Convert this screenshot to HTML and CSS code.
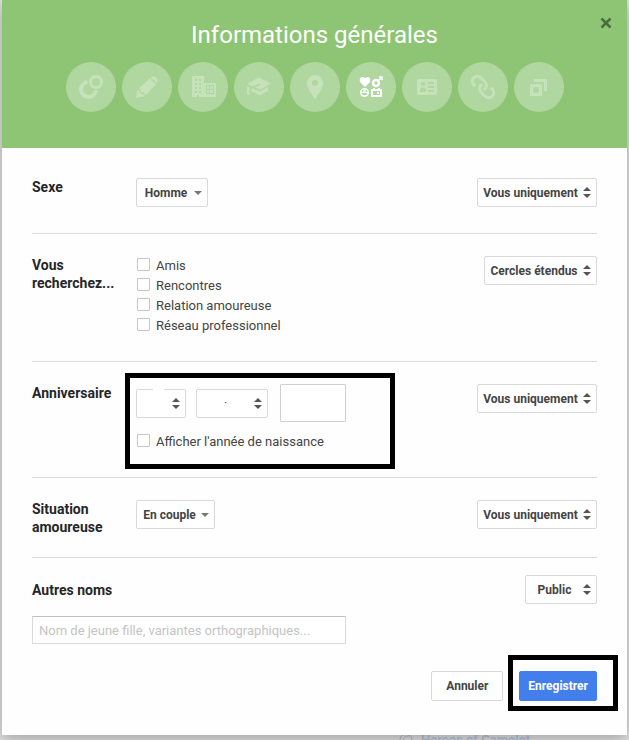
FILE: index.html
```html
<!DOCTYPE html>
<html lang="fr">
<head>
  <meta charset="UTF-8">
  <meta name="viewport" content="width=device-width, initial-scale=1.0">
  <title>Informations générales</title>
  <link rel="stylesheet" href="styles.css">
</head>
<body>
  <div class="behind">
    <svg width="16" height="16" viewBox="0 0 16 16"><circle cx="8" cy="8" r="6"/><path d="M5 11c0-5 2-7 6-7"/></svg>
    Heroes of Camelot
  </div>

  <form class="dialog">
    <header class="header">
      <h1>Informations générales</h1>
      <button type="button" class="close" aria-label="Fermer">
        <svg width="12" height="12" viewBox="0 0 12 12"><path d="M1.500 1.500l9 9M10.500 1.500l-9 9"/></svg>
      </button>
      <nav class="steps">
        <a href="#" class="step" aria-label="Cercles">
          <svg viewBox="0 0 50 50">
            <path d="M21.500 20A7.500 7.500 0 1 0 30 28" fill="none" stroke="currentColor" stroke-width="4"/>
            <circle cx="30" cy="20" r="5.500" fill="none" stroke="currentColor" stroke-width="3"/>
          </svg>
        </a>
        <a href="#" class="step" aria-label="Slogan">
          <svg viewBox="0 0 50 50">
            <path d="M14 36l1.500-8 2 .5 1 3 3 1 .5 2zM16.500 26.500L28 16.500l6 6L23 33.500l-1-2.500-3-1-.5-3zM29 15.500l1.500-1c1.500-1 6 3 5 5L34.500 21z"/>
          </svg>
        </a>
        <a href="#" class="step" aria-label="Emploi">
          <svg viewBox="0 0 50 50">
            <path fill-rule="evenodd" d="M14 14h12v21h-5v-2h-2v2h-5zM17 17v2h2v-2zM21 17v2h2v-2zM17 21v2h2v-2zM21 21v2h2v-2zM17 25v2h2v-2zM21 25v2h2v-2zM17 29v2h2v-2zM21 29v2h2v-2z"/>
            <path fill-rule="evenodd" d="M26 21h12v14H26zM28 23v9h8v-9zM29 24h2v3h-2zM32 24h3v3h-3zM29 28h2v3h-2zM32 28h3v3h-3z"/>
          </svg>
        </a>
        <a href="#" class="step" aria-label="Formation">
          <svg viewBox="0 0 50 50">
            <path d="M13.500 21.500L25 15.500l12 6-10.500 6-5.500-2 6-3-1-1-8 3z"/>
            <path d="M13 24l2.500 1.500V33H13zM17.500 26l8.500 3.500 8-4.500v4l-8 4.500-8.500-4z"/>
          </svg>
        </a>
        <a href="#" class="step" aria-label="Lieux">
          <svg viewBox="0 0 50 50">
            <path fill-rule="evenodd" d="M25 38c-1.500-5-8-10-8-17a8 8 0 0 1 16 0c0 7-6.500 12-8 17zM25 18a3 3 0 1 0 0 6 3 3 0 0 0 0-6z"/>
          </svg>
        </a>
        <a href="#" class="step step-active" aria-label="Informations générales">
          <svg viewBox="0 0 50 50">
            <path d="M19 25l-5-5c-1.500-5 3.500-6.500 5-3.500 1.500-3 6.500-1.500 5 3.500z"/>
            <circle cx="30" cy="21" r="3" fill="none" stroke="currentColor" stroke-width="2.500"/>
            <path d="M32 19l3-3M33 15h3v3" fill="none" stroke="currentColor" stroke-width="1.500"/>
            <path fill-rule="evenodd" d="M18.500 26a4.500 4.500 0 1 0 0 9 4.500 4.500 0 0 0 0-9zM16 28h1.500v2H16zM19.500 28H21v2h-1.500zM15.500 31h6c-.5 3-5.500 3-6 0z"/>
            <path fill-rule="evenodd" d="M25 27h2v-1h2v1h3v-1h2v1h2v8H25zM27 29v4h7v-4zM31 30h2v2h-2z"/>
          </svg>
        </a>
        <a href="#" class="step" aria-label="Coordonnées">
          <svg viewBox="0 0 50 50">
            <path fill-rule="evenodd" d="M16 17h18l1 1v14l-1 1H16l-1-1V18zM21 20a2 2 0 1 0 0 4 2 2 0 0 0 0-4zM18 30h6v-2l-1.500-2.500h-3L18 28zM26 20v2h6v-2zM26 24v2h6v-2zM26 28v2h6v-2z"/>
          </svg>
        </a>
        <a href="#" class="step" aria-label="Liens">
          <svg viewBox="0 0 50 50">
            <g transform="rotate(45 25 25)" fill="none" stroke="currentColor" stroke-width="3">
              <path d="M19 30h-2a5 5 0 0 1 0-10h6a5 5 0 0 1 4.500 6.500"/>
              <path d="M31 20h2a5 5 0 0 1 0 10h-6a5 5 0 0 1-4.500-6.500"/>
            </g>
          </svg>
        </a>
        <a href="#" class="step" aria-label="Photos">
          <svg viewBox="0 0 50 50">
            <path d="M20 17h13v12h-3v-9H20z"/>
            <path fill-rule="evenodd" d="M16 22h12v12H16zM22 25a3 3 0 1 0 0 6 3 3 0 0 0 0-6z"/>
          </svg>
        </a>
      </nav>
    </header>

    <main class="content">
      <section class="row row-first">
        <label class="name" for="sexe">Sexe</label>
        <div class="value">
          <span class="select menu"><select id="sexe"><option>Homme</option></select></span>
        </div>
        <span class="select"><select aria-label="Visibilité du sexe"><option>Vous uniquement</option></select></span>
      </section>

      <section class="row">
        <h2 class="name">Vous recherchez...</h2>
        <div class="value">
          <label class="check"><input type="checkbox">Amis</label>
          <label class="check"><input type="checkbox">Rencontres</label>
          <label class="check"><input type="checkbox">Relation amoureuse</label>
          <label class="check"><input type="checkbox">Réseau professionnel</label>
        </div>
        <span class="select"><select aria-label="Visibilité des recherches"><option>Cercles étendus</option></select></span>
      </section>

      <section class="row">
        <h2 class="name">Anniversaire</h2>
        <div class="value birthday">
          <div class="date">
            <span class="select day"><select aria-label="Jour"><option></option></select></span>
            <span class="select month"><select aria-label="Mois"><option>·</option></select></span>
            <input type="text" class="year" aria-label="Année">
          </div>
          <label class="check"><input type="checkbox">Afficher l'année de naissance</label>
        </div>
        <span class="select"><select aria-label="Visibilité de l'anniversaire"><option>Vous uniquement</option></select></span>
      </section>

      <section class="row row-short">
        <label class="name" for="situation">Situation amoureuse</label>
        <div class="value">
          <span class="select menu"><select id="situation"><option>En couple</option></select></span>
        </div>
        <span class="select"><select aria-label="Visibilité de la situation"><option>Vous uniquement</option></select></span>
      </section>

      <section class="others">
        <div class="others-top">
          <label class="name" for="noms">Autres noms</label>
          <span class="select"><select aria-label="Visibilité des autres noms"><option>Public</option></select></span>
        </div>
        <input type="text" id="noms" class="names" placeholder="Nom de jeune fille, variantes orthographiques...">
      </section>

      <footer class="actions">
        <button type="button" class="btn">Annuler</button>
        <div class="save">
          <button type="submit" class="btn btn-primary">Enregistrer</button>
        </div>
      </footer>
    </main>
  </form>
</body>
</html>
```
FILE: styles.css
```css
*,
*::before,
*::after {
  box-sizing: border-box;
}
body {
  margin: 0;
  position: relative;
  min-height: 100vh;
  overflow: hidden;
  background: #e2e2e2;
  font-family: Roboto, Arial, sans-serif;
  font-size: 13px;
  color: #444;
}
.dialog {
  position: relative;
  margin: 0 2px;
  background: #fefefe;
  box-shadow: 0 4px 16px rgba(0, 0, 0, 0.3);
}

/* page text showing under the dialog */
.behind {
  position: absolute;
  left: 398px;
  top: 731px;
  display: flex;
  align-items: center;
  gap: 7px;
  line-height: 18px;
  font-weight: bold;
  color: #bcc6de;
}
.behind svg {
  fill: none;
  stroke: #b4b8c0;
}

/* header */
.header {
  position: relative;
  height: 148px;
  padding-top: 20px;
  background: #8dc574;
}
h1 {
  margin: 0 0 12px;
  font-size: 24px;
  line-height: 30px;
  font-weight: normal;
  text-align: center;
  color: #fff;
}
.close {
  position: absolute;
  top: 17px;
  right: 15px;
  padding: 0;
  border: none;
  background: none;
  cursor: pointer;
}
.close svg {
  display: block;
  stroke: #4c6b3f;
  stroke-width: 2.5;
}
.steps {
  display: flex;
  justify-content: center;
  gap: 6px;
}
.step {
  width: 50px;
  height: 50px;
  border-radius: 50%;
  background: #b0d79f;
  color: #c6e2ba;
}
.step-active {
  color: #fff;
}
.step svg {
  display: block;
  fill: currentColor;
}

/* rows */
.content {
  padding: 0 30px 34px;
}
.row {
  display: flex;
  align-items: flex-start;
  padding: 22px 0 25px;
  border-bottom: 1px solid #d9d9d9;
}
.row-first {
  padding: 30px 0 26px;
}
.row-short {
  padding-bottom: 21px;
}
.name {
  width: 104px;
  margin: 0;
  font-size: 14px;
  line-height: 18px;
  font-weight: bold;
  color: #262626;
}
.value {
  flex: 1;
}

/* drop-downs */
.select {
  position: relative;
  display: block;
}
.value .select {
  width: fit-content;
}
.select select {
  display: block;
  appearance: none;
  min-width: 72px;
  height: 29px;
  padding: 0 18px 0 5px;
  border: 1px solid #d9d9d9;
  border-radius: 2px;
  background: #fff;
  font-family: inherit;
  font-size: 12px;
  font-weight: bold;
  text-align-last: center;
  color: #444;
}
.select::before,
.select::after {
  content: "";
  position: absolute;
  right: 6px;
  border: 4px solid transparent;
  pointer-events: none;
}
.select::before {
  top: 5px;
  border-bottom-color: #555;
}
.select::after {
  top: 16px;
  border-top-color: #555;
}
.select.menu select {
  padding-left: 6px;
}
.menu::before {
  display: none;
}
.menu::after {
  top: 13px;
  border-top-color: #777;
}
.select.day select {
  min-width: 50px;
  width: 50px;
  border-top-color: transparent;
  background: linear-gradient(to right, #d9d9d9 17px, #fff 17px, #fff 28px, #d9d9d9 28px) border-box no-repeat 0 0 / 100% 1px, #fff;
}
.select.month select {
  font-weight: normal;
}

/* tick boxes */
.check {
  display: flex;
  align-items: center;
  gap: 6px;
  height: 20px;
  padding-bottom: 2px;
}
.check input {
  appearance: none;
  width: 13px;
  height: 13px;
  margin: 0 0 1px 1px;
  border: 1px solid #c6c6c6;
  border-radius: 1px;
  background: #fff;
}
.check input:checked {
  background: #666;
}

/* birthday */
.birthday {
  position: relative;
}
.date {
  display: flex;
  align-items: center;
  gap: 10px;
  margin-bottom: 10px;
}
.year {
  width: 66px;
  height: 38px;
  margin-left: 2px;
  border: 1px solid #d0d0d0;
  border-radius: 1px;
  background: #fff;
}
.birthday::before,
.save::before {
  content: "";
  position: absolute;
  border: 5px solid #000;
  pointer-events: none;
}
.birthday::before {
  left: -11px;
  top: -11px;
  width: 270px;
  height: 96px;
}

/* other names */
.others {
  padding-top: 17px;
}
.others-top {
  display: flex;
  align-items: center;
  justify-content: space-between;
  margin-bottom: 12px;
}
.names {
  display: block;
  width: 100%;
  max-width: 314px;
  height: 28px;
  padding: 0 6px;
  border: 1px solid #d9d9d9;
  border-top-color: #c0c0c0;
  background: #fff;
  font-family: inherit;
  font-size: 13px;
}
.names::placeholder {
  color: #c4c4c4;
}

/* buttons */
.actions {
  display: flex;
  justify-content: flex-end;
  gap: 16px;
  margin-top: 27px;
}
.btn {
  display: block;
  min-width: 72px;
  height: 30px;
  padding: 0 8px;
  border: 1px solid #d9d9d9;
  border-radius: 2px;
  background: #fff;
  font-family: inherit;
  font-size: 12px;
  font-weight: bold;
  color: #444;
  cursor: pointer;
}
.btn-primary {
  border-color: #427fed;
  background: #427fed;
  color: #fff;
}
.save {
  position: relative;
}
.save::before {
  top: -16px;
  right: -21px;
  bottom: -10px;
  left: -11px;
}
```
